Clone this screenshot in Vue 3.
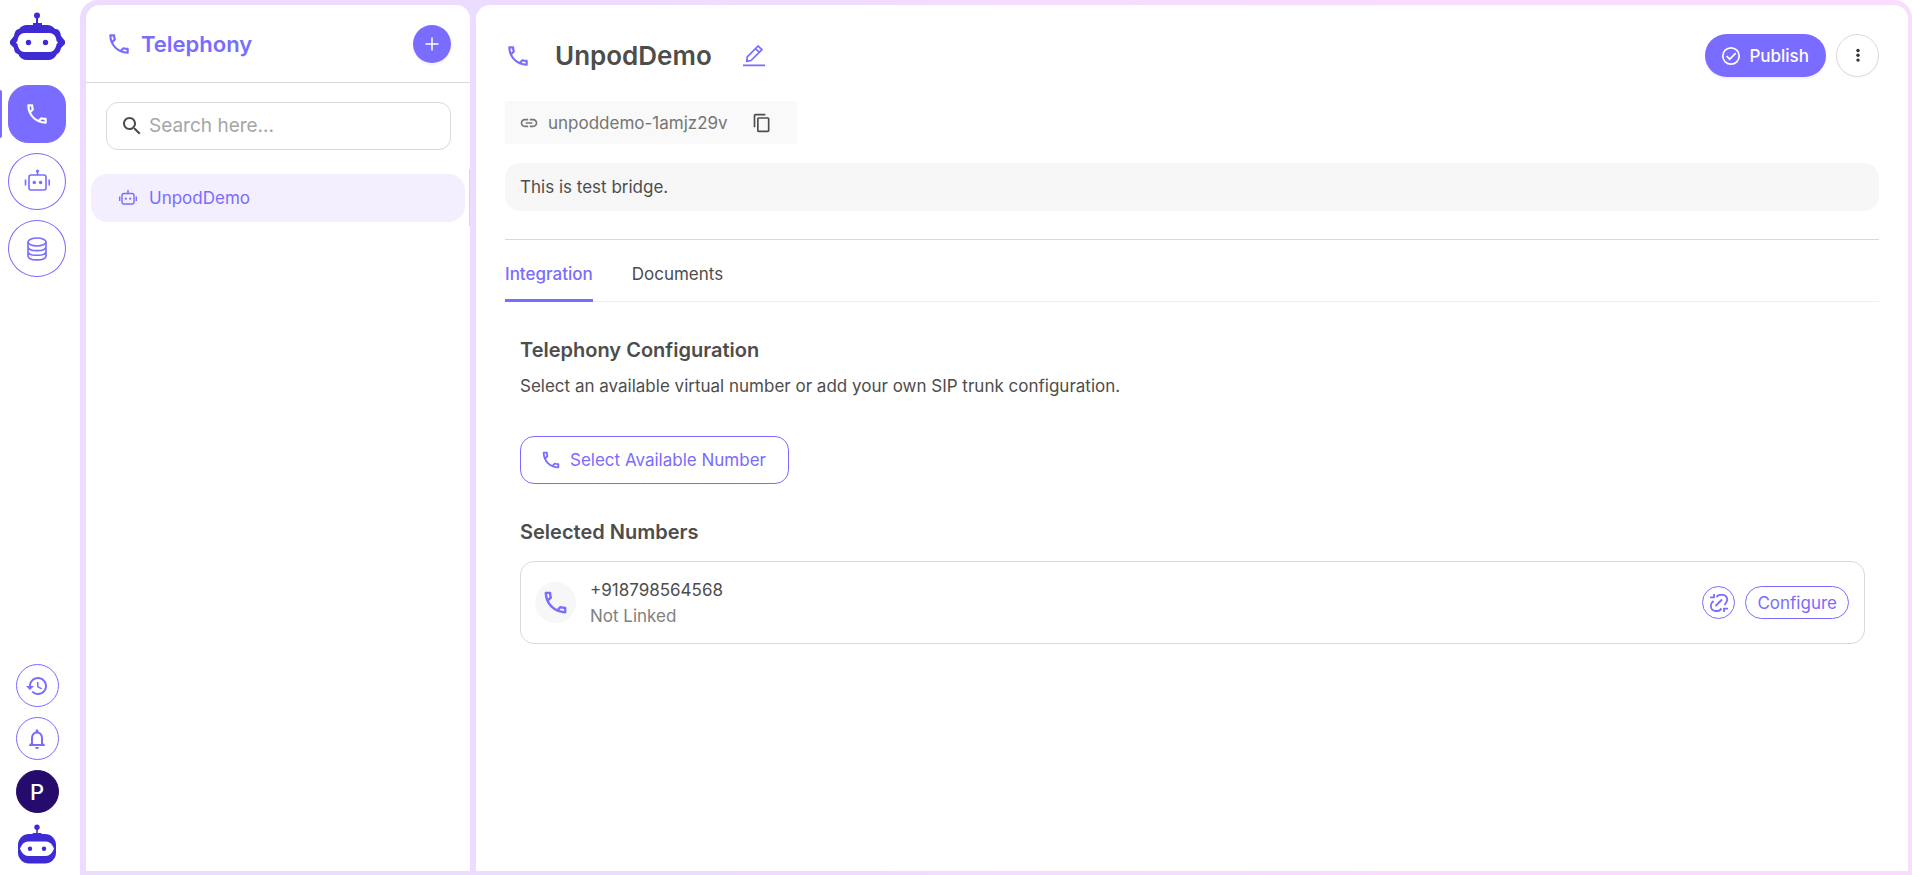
<script setup>
import { ref } from 'vue'

const icons = {
  call: 'M6.54 5c.06.89.21 1.76.45 2.59l-1.2 1.2c-.41-1.2-.67-2.47-.76-3.79h1.51m9.86 12.02c.85.24 1.72.39 2.6.45v1.49c-1.32-.09-2.59-.35-3.8-.75l1.2-1.19M7.5 3H4c-.55 0-1 .45-1 1 0 9.39 7.61 17 17 17 .55 0 1-.45 1-1v-3.49c0-.55-.45-1-1-1-1.24 0-2.45-.2-3.57-.57-.1-.04-.21-.05-.31-.05-.26 0-.51.1-.71.29l-2.2 2.2c-2.83-1.45-5.15-3.76-6.59-6.59l2.2-2.2c.28-.28.36-.67.25-1.02C8.7 6.45 8.5 5.25 8.5 4c0-.55-.45-1-1-1z',
  history: 'M13 3c-4.97 0-9 4.03-9 9H1l3.89 3.89.07.14L9 12H6c0-3.87 3.13-7 7-7s7 3.13 7 7-3.13 7-7 7c-1.93 0-3.68-.79-4.94-2.06l-1.42 1.42C8.27 19.99 10.51 21 13 21c4.97 0 9-4.03 9-9s-4.03-9-9-9zm-1 5v5l4.28 2.54.72-1.21-3.5-2.08V8H12z',
  bell: 'M12 22c1.1 0 2-.9 2-2h-4c0 1.1.9 2 2 2zm6-6v-5c0-3.07-1.63-5.64-4.5-6.32V4c0-.83-.67-1.5-1.5-1.5s-1.5.67-1.5 1.5v.68C7.64 5.36 6 7.92 6 11v5l-2 2v1h16v-1l-2-2zm-2 1H8v-6c0-2.48 1.51-4.5 4-4.5s4 2.02 4 4.5v6z',
  copy: 'M16 1H4c-1.1 0-2 .9-2 2v14h2V3h12V1zm3 4H8c-1.1 0-2 .9-2 2v14c0 1.1.9 2 2 2h11c1.1 0 2-.9 2-2V7c0-1.1-.9-2-2-2zm0 16H8V7h11v14z',
  link: 'M3.9 12c0-1.71 1.39-3.1 3.1-3.1h4V7H7c-2.76 0-5 2.24-5 5s2.24 5 5 5h4v-1.9H7c-1.71 0-3.1-1.39-3.1-3.1zM8 13h8v-2H8v2zm9-6h-4v1.9h4c1.71 0 3.1 1.39 3.1 3.1s-1.39 3.1-3.1 3.1h-4V17h4c2.76 0 5-2.24 5-5s-2.24-5-5-5z',
  search: 'M15.5 14h-.79l-.28-.27C15.41 12.59 16 11.11 16 9.5 16 5.91 13.09 3 9.5 3S3 5.91 3 9.5 5.91 16 9.5 16c1.61 0 3.09-.59 4.23-1.57l.27.28v.79l5 4.99L20.49 19l-4.99-5zm-6 0C7.01 14 5 11.99 5 9.5S7.01 5 9.5 5 14 7.01 14 9.5 11.99 14 9.5 14z',
}

const search = ref('')
const tab = ref('Integration')
const tabs = ['Integration', 'Documents']
const numbers = [{ number: '+918798564568', status: 'Not Linked' }]
</script>

<template>
  <div class="app">
    <nav class="rail" aria-label="Main">
      <a href="#" class="brand" aria-label="Unpod home">
        <svg width="55" height="48" viewBox="0 0 55 48">
          <g fill="#3f2bd3">
            <circle cx="27" cy="3.5" r="3" />
            <path d="M26 4h2v7h4v3h-9v-3h3z" />
            <path d="M17 13h20q5 0 8 4h1q4 0 5 7l4 5v3l-4 4q-1 5-4 6-3 6-9 6H17q-6 0-9-6-4-1-4-6l-4-4v-3l4-5q1-7 5-7 3-4 8-4z" />
          </g>
          <path d="M15 21h24q5 0 7 5 0 3 2 4.500-2 1.500-2 4-2 5.500-7 5.500H15q-5 0-7-5.500 0-2.500-2-4 2-1.500 2-4.500 2-5 7-5z" fill="#fff" />
          <g fill="#3f2bd3"><circle cx="18.500" cy="30.500" r="2.700" /><circle cx="35.500" cy="30.500" r="2.700" /></g>
        </svg>
      </a>

      <div class="rail-main">
        <button class="rail-btn active" aria-label="Telephony">
          <svg width="26" height="26" viewBox="0 0 24 24" fill="currentColor"><path :d="icons.call" /></svg>
        </button>
        <button class="rail-btn" aria-label="Agents">
          <svg width="26" height="26" viewBox="0 0 26 26" fill="none" stroke="currentColor" stroke-width="1.600">
            <rect x="5" y="6" width="17" height="15" rx="2" /><path d="M13.500 6V2M1.500 10.500v6M25.200 10.500v6" />
            <g fill="currentColor" stroke="none"><circle cx="13.500" cy="2" r="1.600" /><circle cx="10.300" cy="13.500" r="1.700" /><circle cx="16.600" cy="13.500" r="1.700" /></g>
          </svg>
        </button>
        <button class="rail-btn" aria-label="Knowledge base">
          <svg width="20" height="24" viewBox="0 0 20 24" fill="none" stroke="currentColor" stroke-width="1.600">
            <ellipse cx="10" cy="5" rx="9" ry="4" /><path d="M1 5v14c0 5.200 18 5.200 18 0V5M1 9.700c0 5.200 18 5.200 18 0M1 14.400c0 5.200 18 5.200 18 0" />
          </svg>
        </button>
      </div>

      <div class="rail-foot">
        <button class="round" aria-label="History"><svg width="24" height="24" viewBox="0 0 24 24" fill="currentColor"><path :d="icons.history" /></svg></button>
        <button class="round" aria-label="Notifications"><svg width="24" height="24" viewBox="0 0 24 24" fill="currentColor"><path :d="icons.bell" /></svg></button>
        <button class="round avatar">P</button>
        <a href="#" class="mini" aria-label="Unpod">
          <svg width="38" height="40" viewBox="0 0 38 40">
            <g fill="#3f2bd3"><circle cx="19" cy="3.200" r="2.700" /><path d="M18.200 4h1.600v5h3q1 0 1.500 2H14q.5-2 1.500-2h2.700z" /><rect y="10" width="38" height="29.500" rx="11" /></g>
            <path d="M10 17.500h18q5 0 8 7.200-3 7.300-8 7.300H10q-5 0-8-7.300 3-7.200 8-7.200z" fill="#fff" />
            <g fill="#3f2bd3"><circle cx="12" cy="24.700" r="2.200" /><circle cx="26" cy="24.700" r="2.200" /></g>
          </svg>
        </a>
      </div>
    </nav>

    <div class="frame">
      <aside class="list">
        <header class="list-head">
          <svg width="26" height="26" viewBox="0 0 24 24" fill="currentColor"><path :d="icons.call" /></svg>
          <h2>Telephony</h2>
          <button class="add" aria-label="Add bridge">
            <svg width="14" height="14" viewBox="0 0 14 14" stroke="currentColor" stroke-width="1.500"><path d="M7 .5v13M.5 7h13" /></svg>
          </button>
        </header>
        <label class="search">
          <svg width="24" height="24" viewBox="0 0 24 24" fill="currentColor"><path :d="icons.search" /></svg>
          <input v-model="search" type="text" placeholder="Search here..." aria-label="Search" />
        </label>
        <a href="#" class="item">
          <svg width="18" height="16" viewBox="0 0 18 16" fill="none" stroke="currentColor" stroke-width="1.400">
            <rect x="3" y="3.500" width="12" height="10.500" rx="2" /><path d="M9 3.500V0M.7 6.500v4.500M17.300 6.500v4.500" />
            <g fill="currentColor" stroke="none"><circle cx="6.800" cy="8.700" r="1.100" /><circle cx="11.200" cy="8.700" r="1.100" /></g>
          </svg>
          <span>UnpodDemo</span>
        </a>
        <i class="handle"></i>
      </aside>

      <main class="detail">
        <header class="title-row">
          <svg class="accent" width="26" height="26" viewBox="0 0 24 24" fill="currentColor"><path :d="icons.call" /></svg>
          <h1>UnpodDemo</h1>
          <button class="plain accent" aria-label="Edit name">
            <svg width="22" height="22" viewBox="0 0 22 22" fill="none" stroke="currentColor" stroke-width="1.700" stroke-linejoin="round"><path d="M4.300 11.800 15 1l4 3.600L8 15.500l-4.300.9zM12.500 3.800l3.800 3.400M0 20.300h22" /></svg>
          </button>
          <div class="actions">
            <button class="publish">
              <svg width="18" height="18" viewBox="0 0 18 18" fill="none" stroke="currentColor" stroke-width="1.700"><circle cx="9" cy="9" r="8.200" /><path d="m4.500 9 3.200 3.200 6-6" /></svg>
              Publish
            </button>
            <button class="more" aria-label="More actions">
              <svg width="4" height="14" viewBox="0 0 4 14" fill="currentColor"><circle cx="2" cy="1.500" r="1.700" /><circle cx="2" cy="6.300" r="1.700" /><circle cx="2" cy="11.100" r="1.700" /></svg>
            </button>
          </div>
        </header>

        <div class="slug">
          <svg width="20" height="20" viewBox="0 0 24 24" fill="currentColor"><path :d="icons.link" /></svg>
          <span>unpoddemo-1amjz29v</span>
          <button class="plain copy" aria-label="Copy handle"><svg width="20" height="20" viewBox="0 0 24 24" fill="currentColor"><path :d="icons.copy" /></svg></button>
        </div>

        <p class="about">This is test bridge.</p>

        <div class="tabs" role="tablist">
          <button v-for="t in tabs" :key="t" role="tab" :aria-selected="tab === t" :class="['tab', { on: tab === t }]" @click="tab = t">{{ t }}</button>
        </div>

        <section class="body">
          <h3>Telephony Configuration</h3>
          <p class="lead">Select an available virtual number or add your own SIP trunk configuration.</p>
          <button class="select-number">
            <svg width="22" height="22" viewBox="0 0 24 24" fill="currentColor"><path :d="icons.call" /></svg>
            Select Available Number
          </button>
          <h3>Selected Numbers</h3>
          <article v-for="n in numbers" :key="n.number" class="number">
            <span class="disc"><svg width="29" height="29" viewBox="0 0 24 24" fill="currentColor"><path :d="icons.call" /></svg></span>
            <div class="number-text">
              <strong>{{ n.number }}</strong>
              <span>{{ n.status }}</span>
            </div>
            <button class="unlink" aria-label="Unlink number">
              <svg width="18" height="18" viewBox="0 0 18 18" fill="none" stroke="currentColor" stroke-width="1.800">
                <path d="M0 3.300h4V0M18 14.700h-4V18M5.500 12 12 5.500M6.500 3 8 1.500q1-.7 2.500-.7h2q4.700.3 4.700 5-.2 1.700-1.200 3L14.500 11M3.500 7 2 8.500Q.8 10 .8 12q.3 4.700 4.700 5h2q1.500 0 2.500-1l1.500-1.500" />
              </svg>
            </button>
            <button class="configure">Configure</button>
          </article>
        </section>
      </main>
    </div>
  </div>
</template>

<style>
body { margin: 0; background: #fff; }
</style>

<style scoped>
* { box-sizing: border-box; }
.app {
  display: flex;
  min-height: 100vh;
  font: 400 16px/24px Inter, "Liberation Sans", sans-serif;
  color: #4d4d4d;
}
svg { display: block; flex: none; overflow: visible; }
button { font: inherit; cursor: pointer; padding: 0; display: flex; align-items: center; justify-content: center; }
h1, h2, h3, p { margin: 0; }
a { color: inherit; text-decoration: none; }
.accent { color: #796cff; }
.plain { border: 0; background: none; }

.rail { width: 80px; flex: none; display: flex; flex-direction: column; padding: 12px 14px 11px 8px; }
.brand { padding-left: 2px; }
.rail-main { display: grid; gap: 10px; margin-top: 25px; }
.rail-btn { position: relative; width: 58px; height: 57px; border: 1px solid #796cff; border-radius: 50%; background: #fff; color: #796cff; }
.rail-btn.active { height: 58px; background: #796cff; color: #fff; border-radius: 20px; }
.rail-btn.active::before { content: ""; position: absolute; left: -9px; top: 4px; width: 2px; height: 48px; background: #796cff; border-radius: 0 4px 4px 0; }
.rail-foot { margin-top: auto; display: flex; flex-direction: column; align-items: center; gap: 10px; }
.round { width: 43px; height: 43px; border: 1px solid #796cff; border-radius: 50%; background: #fff; color: #796cff; }
.avatar { background: #240b6c; border-color: #240b6c; color: #fff; font-size: 22px; font-weight: 500; }
.mini { margin-top: 1px; }

.frame {
  flex: 1; min-width: 0; display: flex; gap: 6px; padding: 5px 4px 4px 6px;
  background: linear-gradient(90deg, #ecdcff, #ecdcff 25%, #fadcff 75%);
  border-radius: 18px 18px 0 0;
}
.list { position: relative; width: 384px; flex: none; background: #fff; border-radius: 14px 14px 0 0; }
.list-head { height: 78px; display: flex; align-items: center; padding: 0 19px 0 20px; border-bottom: 1px solid #d9d9d9; color: #796cff; }
.list-head h2 { margin-left: 9px; font-size: 22px; line-height: 28px; font-weight: 600; }
.add { margin-left: auto; width: 38px; height: 38px; border: 0; border-radius: 50%; background: #796cff; color: #fff; box-shadow: 0 2px 2px rgba(121, 108, 255, .1); }
.search { display: flex; align-items: center; gap: 5px; height: 48px; margin: 19px 19px 0 20px; padding: 0 13px; border: 1px solid #d9d9d9; border-radius: 12px; color: #4d4d4d; }
.search input { flex: 1; min-width: 0; border: 0; outline: 0; padding: 0; background: none; font: inherit; font-size: 19px; color: inherit; }
.search input::placeholder { color: #a6a6a6; opacity: 1; }
.item { display: flex; align-items: center; gap: 12px; height: 48px; margin: 24px 5px 0; padding: 0 28px; border-radius: 16px; background: #f4efff; color: #796cff; font-size: 17px; }
.handle { position: absolute; right: 0; top: 164px; width: 1px; height: 57px; background: #d9d9d9; }

.detail { flex: 1; min-width: 0; background: #fff; border-radius: 14px 14px 0 0; padding: 29px; }
.title-row { display: flex; align-items: center; height: 43px; }
.title-row h1 { margin: 0 31px 0 24px; font-size: 26px; line-height: 32px; font-weight: 600; }
.actions { display: flex; gap: 10px; margin-left: auto; }
.publish { height: 43px; gap: 9px; padding: 0 17px; border: 0; border-radius: 22px; background: #796cff; color: #fff; font-size: 17px; font-weight: 500; box-shadow: 0 2px 2px rgba(121, 108, 255, .1); }
.more { width: 43px; height: 43px; border: 1px solid #d9d9d9; border-radius: 50%; background: #fff; color: #333; box-shadow: 0 2px 2px rgba(0, 0, 0, .02); }
.slug { display: flex; align-items: center; width: fit-content; height: 43px; margin-top: 24px; padding: 0 25px 0 14px; background: #f9f9f9; color: #757575; font-size: 17px; }
.slug span { margin: 0 24px 0 9px; }
.copy { color: #4d4d4d; }
.about { margin-top: 19px; padding: 12px 15px; border-radius: 15px; background: #f7f7f7; }
.about, .lead { font-size: 17px; }
.tabs { display: flex; gap: 39px; margin-top: 28px; border-top: 1px solid #d9d9d9; border-bottom: 1px solid #f0f0f0; }
.tab { height: 62px; margin-bottom: -1px; padding: 16px 0 8px; border: 0; border-bottom: 3px solid transparent; background: none; color: #4d4d4d; font-size: 17px; }
.tab.on { color: #796cff; border-color: #796cff; font-weight: 500; }
.body { padding: 34px 14px 0 15px; }
.body h3 { font-size: 20px; line-height: 28px; font-weight: 600; }
.lead { margin-top: 10px; }
.select-number { height: 48px; margin: 38px 0 34px; padding: 0 22px 0 19px; gap: 8px; border: 1px solid #796cff; border-radius: 14px; background: #fff; color: #796cff; font-size: 17px; }
.number { display: flex; align-items: center; height: 83px; margin-top: 15px; padding: 0 15px 0 14px; border: 1px solid #d9d9d9; border-radius: 14px; }
.disc { width: 41px; height: 41px; display: grid; place-items: center; border-radius: 50%; background: #f7f7f7; color: #796cff; }
.number-text { display: grid; margin: 0 auto 0 14px; font-size: 17px; line-height: 26px; }
.number-text strong { font-weight: 400; }
.number-text span { color: #808080; }
.unlink { width: 33px; height: 33px; margin-right: 10px; border: 1px solid #796cff; border-radius: 50%; background: #fff; color: #796cff; }
.configure { height: 33px; padding: 0 11px; border: 1px solid #796cff; border-radius: 17px; background: #fff; color: #796cff; font-size: 17px; }
</style>
